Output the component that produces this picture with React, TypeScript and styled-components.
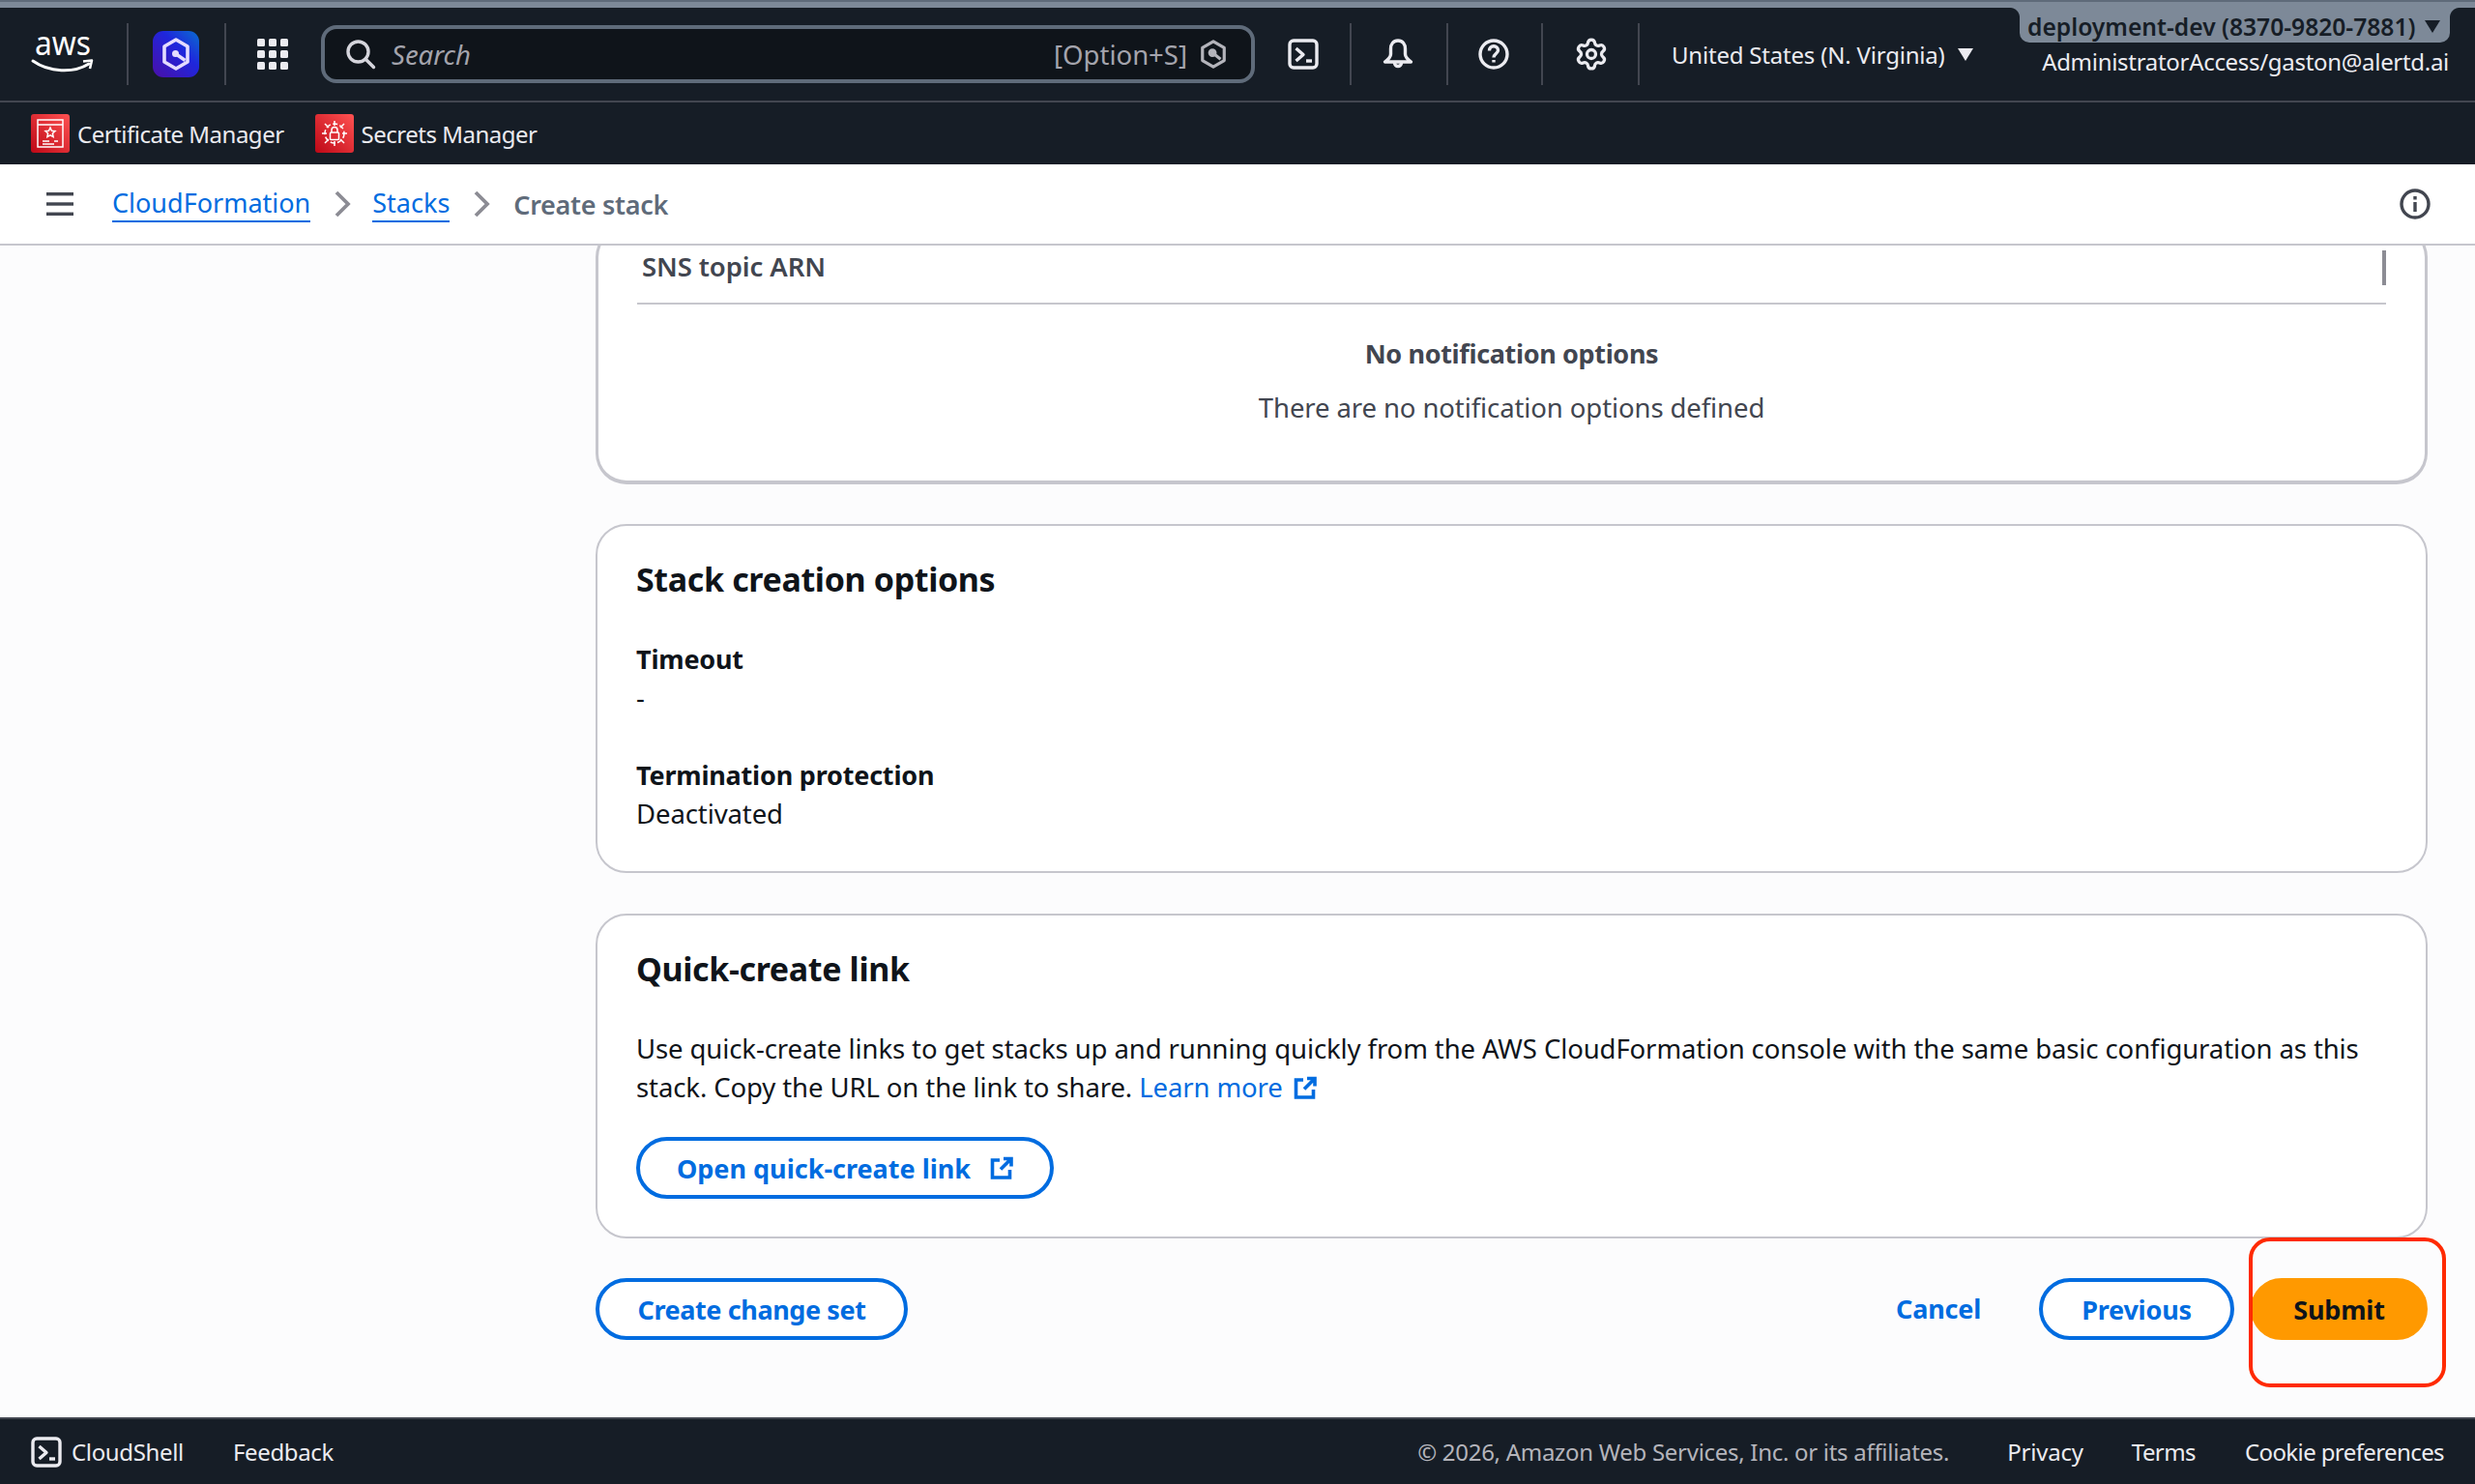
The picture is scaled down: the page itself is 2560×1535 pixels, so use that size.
import React from "react";
import styled, { createGlobalStyle } from "styled-components";
import { Settings } from "lucide-react";

const Global = createGlobalStyle`
  html, body { margin: 0; padding: 0; }
  body { font-family: "Noto Sans", "Open Sans", sans-serif; background: #fcfcfd; }
  * { box-sizing: border-box; }
`;

const Page = styled.div`
  position: relative;
  display: flex;
  flex-direction: column;
  width: 2560px;
  height: 1535px;
  overflow: hidden;
  background: #fcfcfd;
`;
const TopStripe = styled.div`
  height: 8px;
  background: #7d8998;
  border-top: 2px solid #5f6b7a;
  flex: none;
`;
const TopBar = styled.header`
  position: relative;
  display: flex;
  align-items: center;
  height: 98px;
  flex: none;
  background: #161d26;
  border-bottom: 2px solid #424650;
  color: #fff;
`;
const Sep = styled.span<{ $ml: number; $mr: number }>`
  flex: none;
  width: 2px;
  height: 64px;
  background: #424650;
  margin: 0 ${(p) => p.$mr}px 0 ${(p) => p.$ml}px;
`;
const IconSlot = styled.span<{ $w: number; $h?: number; $ml?: number }>`
  flex: none;
  display: inline-flex;
  align-items: center;
  justify-content: center;
  width: ${(p) => p.$w}px;
  height: ${(p) => p.$h ?? p.$w}px;
  margin-left: ${(p) => p.$ml ?? 0}px;
  svg { display: block; width: 100%; height: 100%; flex: none; overflow: visible; }
`;
const LearnIcon = styled(IconSlot)`
  vertical-align: -2px;
`;
const GearSlot = styled(IconSlot)`
  svg { width: 36px; height: 36px; }
`;
const SearchBox = styled.div`
  flex: none;
  display: flex;
  align-items: center;
  width: 966px;
  height: 60px;
  margin-left: 34px;
  padding: 0 24px 0 22px;
  background: #0f141a;
  border: 4px solid #5f6b7a;
  border-radius: 16px;
`;
const SearchText = styled.span`
  flex: 1;
  margin-left: 17px;
  font-size: 27.5px;
  font-style: italic;
  color: #a4a4ad;
`;
const Shortcut = styled.span`
  font-size: 27.5px;
  color: #a4a4ad;
  margin-right: 12px;
`;
const Region = styled.span`
  display: flex;
  align-items: center;
  margin-left: 33px;
  font-size: 24px;
  letter-spacing: -0.2px;
  color: #ebebf0;
`;
const Caret = styled.span<{ $c: string; $ml: number }>`
  display: inline-block;
  margin-left: ${(p) => p.$ml}px;
  width: 0;
  height: 0;
  border-left: 8px solid transparent;
  border-right: 8px solid transparent;
  border-top: 13px solid ${(p) => p.$c};
`;
const AccountChip = styled.div`
  position: absolute;
  top: 0;
  right: 26px;
  height: 36px;
  width: 445px;
  padding: 2px 0 0 8px;
  display: flex;
  align-items: center;
  background: #7d8998;
  border-radius: 0 0 10px 10px;
  font-size: 24.6px;
  font-weight: 600;
  color: #161d26;
  white-space: nowrap;
  &::before, &::after {
    content: "";
    position: absolute;
    top: 0;
    width: 10px;
    height: 10px;
  }
  &::before {
    left: -10px;
    background: radial-gradient(circle at 0 100%, #161d26 9.500px, #7d8998 10.500px);
  }
  &::after {
    right: -10px;
    background: radial-gradient(circle at 100% 100%, #161d26 9.500px, #7d8998 10.500px);
  }
`;
const Role = styled.div`
  position: absolute;
  top: 39px;
  right: 27px;
  font-size: 24px;
  letter-spacing: -0.3px;
  color: #ebebf0;
  white-space: nowrap;
`;
const ServiceBar = styled.nav`
  display: flex;
  align-items: center;
  height: 64px;
  flex: none;
  padding-left: 32px;
  background: #161d26;
  color: #ebebf0;
  font-size: 24px;
  letter-spacing: -0.5px;
`;
const Service = styled.span`
  display: flex;
  align-items: center;
  gap: 8px;
  margin-right: 32px;
`;
const ServiceIcon = styled.span`
  display: flex;
  width: 40px;
  height: 40px;
  border-radius: 3px;
  background: linear-gradient(45deg, #bd0816, #ff5252);
  svg { width: 100%; height: 100%; display: block; }
`;
const Crumbs = styled.div`
  display: flex;
  align-items: center;
  height: 84px;
  flex: none;
  padding: 0 46px 0 48px;
  background: #fff;
  border-bottom: 2px solid #c6c6cd;
  font-size: 27px;
`;
const CrumbLink = styled.a<{ $ml: number }>`
  margin-left: ${(p) => p.$ml}px;
  color: #006ce0;
  border-bottom: 2px solid #006ce0;
  line-height: 36px;
`;
const CrumbCurrent = styled.span`
  margin-left: 24px;
  color: #5f6b7a;
  font-weight: 600;
  letter-spacing: -0.3px;
`;
const Spacer = styled.span`
  flex: 1;
`;
const Main = styled.main`
  flex: 1;
  min-height: 0;
  overflow: hidden;
  display: flex;
  flex-direction: column;
  padding: 0 49px 0 616px;
  color: #0f141a;
  font-size: 27.5px;
  letter-spacing: -0.1px;
  line-height: 40px;
`;
const Card = styled.section<{ $h?: number }>`
  background: #fff;
  border: 2px solid #c6c6cd;
  border-radius: 32px;
  padding: 33px 40px 0 40px;
  margin-bottom: 42px;
  height: ${(p) => (p.$h ? `${p.$h}px` : "auto")};
`;
const ClippedCard = styled(Card)`
  margin-top: -20px;
  margin-bottom: 41px;
  height: 267px;
  border-width: 3px;
  border-bottom-width: 4px;
  padding: 19px 40px 0;
`;
const TableHead = styled.div`
  position: relative;
  height: 59px;
  padding: 0 0 0 5px;
  border-bottom: 2px solid #c6c6cd;
  color: #424650;
  font-weight: 600;
`;
const ColumnTick = styled.span`
  position: absolute;
  right: 0;
  top: 3px;
  width: 4px;
  height: 36px;
  background: #8c8c94;
`;
const Empty = styled.div`
  text-align: center;
  padding-top: 31px;
`;
const EmptyTitle = styled.div`
  font-size: 27px;
  letter-spacing: -0.35px;
  font-weight: 700;
  color: #424650;
  margin-bottom: 16px;
`;
const EmptyText = styled.div`
  color: #424650;
`;
const CardTitle = styled.h2`
  margin: 0 0 41px;
  font-size: 34px;
  letter-spacing: -0.36px;
  line-height: 44px;
  font-weight: 700;
`;
const Label = styled.div`
  font-size: 27px;
  letter-spacing: -0.2px;
  font-weight: 700;
`;
const Value = styled.div`
  margin-bottom: 40px;
`;
const Para = styled.p`
  margin: 0 0 31px;
`;
const InlineLink = styled.a`
  color: #006ce0;
`;
const Button = styled.button<{ $wide?: number; $ls?: number }>`
  display: inline-flex;
  align-items: center;
  justify-content: center;
  height: 64px;
  width: ${(p) => p.$wide}px;
  padding: 0;
  font: 700 27px "Noto Sans", sans-serif;
  letter-spacing: ${(p) => p.$ls ?? -0.2}px;
  color: #006ce0;
  background: #fff;
  border: 4px solid #006ce0;
  border-radius: 32px;
`;
const PrimaryButton = styled(Button)`
  background: #ff9900;
  border-color: #ff9900;
  color: #0f141a;
`;
const TextButton = styled.span`
  font-size: 27px;
  letter-spacing: -0.2px;
  font-weight: 700;
  color: #006ce0;
  margin-right: 60px;
`;
const Actions = styled.div`
  display: flex;
  align-items: center;
  margin-top: -1px;
  height: 64px;
`;
const ActionGap = styled.span`
  width: 17px;
  flex: none;
`;
const Highlight = styled.div`
  position: absolute;
  left: 2326px;
  top: 1280px;
  width: 204px;
  height: 155px;
  border: 4px solid #ff2a00;
  border-radius: 22px;
  pointer-events: none;
`;
const Footer = styled.footer`
  display: flex;
  align-items: center;
  height: 69px;
  flex: none;
  padding: 0 32px;
  background: #161d26;
  border-top: 2px solid #424650;
  color: #ebebf0;
  font-size: 24px;
  letter-spacing: -0.35px;
`;
const FootItem = styled.span<{ $ml?: number; $ls?: number }>`
  margin-left: ${(p) => p.$ml ?? 0}px;
  letter-spacing: ${(p) => p.$ls ?? -0.35}px;
`;
const Copy = styled.span`
  color: #b4b4bb;
  margin-right: 60px;
  letter-spacing: -0.29px;
`;

const External = ({ c }: { c: string }) => (
  <svg viewBox="0 0 24 24" fill="none" stroke={c} strokeWidth="3.6">
    <path d="M10 4H2.500v18h18v-8" />
    <path d="M14 2.500h8v8M22 2.500 11 13.500" />
  </svg>
);
const Term = () => (
  <svg viewBox="0 0 32 32" fill="none" stroke="#ebebf0" strokeWidth="3.400" strokeLinejoin="round">
    <rect x="2" y="2" width="28" height="28" rx="4" />
    <path d="M8.500 10l7.500 6.500-7.500 6.500" />
    <path d="M19 23h6" />
  </svg>
);
const QHex = ({ c, sw = 3 }: { c: string; sw?: number }) => (
  <svg viewBox="0 0 32 32" fill="none" stroke={c} strokeWidth={sw}>
    <path d="M16 2 28 9v14l-12 7-12-7V9z" strokeLinejoin="round" />
    <circle cx="15" cy="14.500" r="3" fill={c} />
    <path d="M15 14.500l9 7" />
  </svg>
);
const Chevron = () => (
  <svg viewBox="0 0 18 28" fill="none" stroke="#8c8c94" strokeWidth="3.800">
    <path d="M3 2l12 12L3 26" />
  </svg>
);

export default function App() {
  return (
    <Page>
      <Global />
      <TopStripe />
      <TopBar>
        <IconSlot $w={64} $h={40} $ml={33}>
          <svg viewBox="0 0 64 40">
            <text x="3" y="21" fontFamily="Noto Sans" fontSize="35" fill="#fff" textLength="58" lengthAdjust="spacingAndGlyphs">aws</text>
            <path d="M1 27C18 39 43 40 59 30" fill="none" stroke="#fff" strokeWidth="3" strokeLinecap="round" />
            <path d="M53 27.500 62 26.500 60 35" fill="none" stroke="#fff" strokeWidth="2.500" strokeLinejoin="round" />
          </svg>
        </IconSlot>
        <Sep $ml={34} $mr={25} />
        <IconSlot $w={48}>
          <svg viewBox="0 0 48 48">
            <defs>
              <linearGradient id="qg" x1="0" y1="1" x2="1" y2="0">
                <stop offset="0" stopColor="#4a0fa8" />
                <stop offset=".6" stopColor="#1f26dc" />
                <stop offset="1" stopColor="#0a6fd0" />
              </linearGradient>
            </defs>
            <rect width="48" height="48" rx="11" fill="url(#qg)" />
            <path d="M24 9 36 16v16l-12 7-12-7V16z" fill="none" stroke="#e4dcff" strokeWidth="3.600" strokeLinejoin="round" />
            <circle cx="23.500" cy="23.500" r="3.500" fill="#e4dcff" />
            <path d="M23.500 23.500l10 7" stroke="#e4dcff" strokeWidth="3.400" />
          </svg>
        </IconSlot>
        <Sep $ml={26} $mr={32} />
        <IconSlot $w={32}>
          <svg viewBox="0 0 32 32" fill="#ebebf0">
            {[0, 12, 24].flatMap((y) =>
              [0, 12, 24].map((x) => <rect key={`${x}-${y}`} x={x} y={y} width="8" height="8" rx="1.500" />),
            )}
          </svg>
        </IconSlot>
        <SearchBox>
          <IconSlot $w={30}>
            <svg viewBox="0 0 30 30" fill="none" stroke="#d5d5dc" strokeWidth="3.400">
              <circle cx="12.500" cy="12.500" r="10.500" />
              <path d="M20 20l8.500 8.500" strokeLinecap="round" />
            </svg>
          </IconSlot>
          <SearchText>Search</SearchText>
          <Shortcut>[Option+S]</Shortcut>
          <IconSlot $w={30} $h={32}>
            <QHex c="#b4b4bb" sw={3.400} />
          </IconSlot>
        </SearchBox>
        <IconSlot $w={32} $ml={34}>
          <Term />
        </IconSlot>
        <Sep $ml={32} $mr={32} />
        <IconSlot $w={32}>
          <svg viewBox="0 0 32 32" fill="none" stroke="#ebebf0" strokeWidth="3.400" strokeLinejoin="round">
            <path d="M16 2c-5 0-7.500 4-7.500 8.500V16c0 3-2 5-6 8h27c-4-3-6-5-6-8v-5.500C23.500 6 21 2 16 2z" />
            <path d="M12.500 25a3.500 3.500 0 0 0 7 0" />
          </svg>
        </IconSlot>
        <Sep $ml={34} $mr={31} />
        <IconSlot $w={32}>
          <svg viewBox="0 0 32 32" fill="none" stroke="#ebebf0" strokeWidth="3.400">
            <circle cx="16" cy="16" r="14" />
            <path d="M11.500 12.500c0-3 2-4.700 4.500-4.700s4.500 1.700 4.500 4.200c0 3.500-4.500 3.500-4.500 7.500" />
            <path d="M16 22v2.500" />
          </svg>
        </IconSlot>
        <Sep $ml={33} $mr={34} />
        <GearSlot $w={32}>
          <Settings color="#ebebf0" strokeWidth={2.200} />
        </GearSlot>
        <Sep $ml={32} $mr={0} />
        <Region>
          United States (N. Virginia)
          <Caret $c="#ebebf0" $ml={13} />
        </Region>
        <AccountChip>
          deployment-dev (8370-9820-7881)
          <Caret $c="#161d26" $ml={10} />
        </AccountChip>
        <Role>AdministratorAccess/gaston@alertd.ai</Role>
      </TopBar>
      <ServiceBar>
        <Service>
          <ServiceIcon>
            <svg viewBox="0 0 40 40" fill="none" stroke="#fff" strokeWidth="1.500">
              <rect x="7" y="6" width="26" height="28" />
              <path d="M7 11h26M12 28h7M12 31h12M24 28h4" />
              <path d="M20 14l1.500 3.200 3.500.4-2.600 2.400.7 3.500-3.100-1.700-3.100 1.700.7-3.500-2.600-2.400 3.500-.4z" />
            </svg>
          </ServiceIcon>
          Certificate Manager
        </Service>
        <Service>
          <ServiceIcon>
            <svg viewBox="0 0 40 40" fill="none" stroke="#fff" strokeWidth="1.500">
              <circle cx="20" cy="20" r="10" strokeDasharray="5 2.500" />
              <rect x="15.500" y="19" width="9" height="7.500" rx="1" />
              <path d="M17 19v-2.500a3 3 0 0 1 6 0V19M20 7v5M20 28v5M7 20h5M28 20h5M10 10l4 4M30 10l-4 4M10 30l4-4M30 30l-4-4" />
            </svg>
          </ServiceIcon>
          Secrets Manager
        </Service>
      </ServiceBar>
      <Crumbs>
        <IconSlot $w={28} $h={24}>
          <svg viewBox="0 0 28 24" fill="#424650">
            <rect width="28" height="3.400" />
            <rect y="10.300" width="28" height="3.400" />
            <rect y="20.600" width="28" height="3.400" />
          </svg>
        </IconSlot>
        <CrumbLink $ml={40}>CloudFormation</CrumbLink>
        <IconSlot $w={18} $h={28} $ml={24}>
          <Chevron />
        </IconSlot>
        <CrumbLink $ml={22}>Stacks</CrumbLink>
        <IconSlot $w={18} $h={28} $ml={24}>
          <Chevron />
        </IconSlot>
        <CrumbCurrent>Create stack</CrumbCurrent>
        <Spacer />
        <IconSlot $w={32}>
          <svg viewBox="0 0 32 32" fill="none" stroke="#424650" strokeWidth="3.400">
            <circle cx="16" cy="16" r="14" />
            <path d="M16 14v10M16 8v3.500" />
          </svg>
        </IconSlot>
      </Crumbs>
      <Main>
        <ClippedCard>
          <TableHead>
            SNS topic ARN
            <ColumnTick />
          </TableHead>
          <Empty>
            <EmptyTitle>No notification options</EmptyTitle>
            <EmptyText>There are no notification options defined</EmptyText>
          </Empty>
        </ClippedCard>
        <Card $h={361}>
          <CardTitle>Stack creation options</CardTitle>
          <Label>Timeout</Label>
          <Value>-</Value>
          <Label>Termination protection</Label>
          <div>Deactivated</div>
        </Card>
        <Card $h={336}>
          <CardTitle>Quick-create link</CardTitle>
          <Para>
            Use quick-create links to get stacks up and running quickly from the AWS CloudFormation console with the same
            basic configuration as this stack. Copy the URL on the link to share.{" "}
            <InlineLink>
              Learn more{" "}
              <LearnIcon $w={24} $ml={4}>
                <External c="#006ce0" />
              </LearnIcon>
            </InlineLink>
          </Para>
          <Button $wide={432} $ls={0}>
            Open quick-create link
            <IconSlot $w={24} $ml={20}>
              <External c="#006ce0" />
            </IconSlot>
          </Button>
        </Card>
        <Actions>
          <Button $wide={323} $ls={-0.4}>Create change set</Button>
          <Spacer />
          <TextButton>Cancel</TextButton>
          <Button $wide={202}>Previous</Button>
          <ActionGap />
          <PrimaryButton $wide={183}>Submit</PrimaryButton>
        </Actions>
      </Main>
      <Footer>
        <IconSlot $w={32}>
          <Term />
        </IconSlot>
        <FootItem $ml={10}>CloudShell</FootItem>
        <FootItem $ml={51}>Feedback</FootItem>
        <Spacer />
        <Copy>© 2026, Amazon Web Services, Inc. or its affiliates.</Copy>
        <FootItem $ls={-0.2}>Privacy</FootItem>
        <FootItem $ml={50} $ls={-0.6}>Terms</FootItem>
        <FootItem $ml={51} $ls={-0.6}>Cookie preferences</FootItem>
      </Footer>
      <Highlight />
    </Page>
  );
}
